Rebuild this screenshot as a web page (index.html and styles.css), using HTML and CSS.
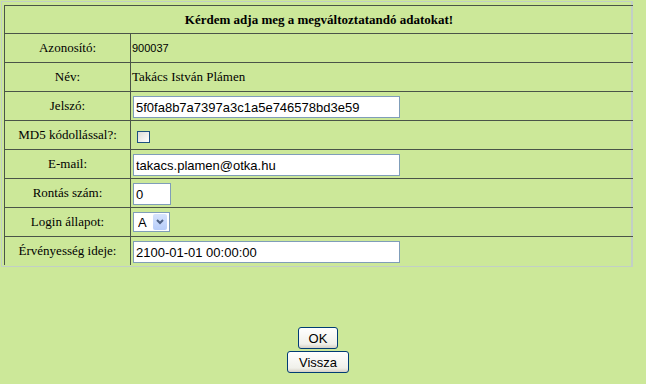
FILE: index.html
```html
<!DOCTYPE html>
<html lang="hu">
  <head>
    <meta charset="UTF-8" />
    <title>Felhasználó módosítása</title>
    <link rel="stylesheet" href="styles.css">
  </head>
  <body>
    <div class="page">
      <div class="frame">
        <table class="form-table">
          <tr>
            <th colspan="2">Kérdem adja meg a megváltoztatandó adatokat!</th>
          </tr>
          <tr>
            <td class="label">Azonosító:</td>
            <td class="value small">900037</td>
          </tr>
          <tr>
            <td class="label">Név:</td>
            <td class="value">Takács István Plámen</td>
          </tr>
          <tr>
            <td class="label">Jelszó:</td>
            <td class="value"><input type="text" class="field wide" value="5f0fa8b7a7397a3c1a5e746578bd3e59" /></td>
          </tr>
          <tr>
            <td class="label">MD5 kódollással?:</td>
            <td class="value"><input type="checkbox" class="check" /></td>
          </tr>
          <tr>
            <td class="label">E-mail:</td>
            <td class="value"><input type="text" class="field wide" value="takacs.plamen@otka.hu" /></td>
          </tr>
          <tr>
            <td class="label">Rontás szám:</td>
            <td class="value"><input type="text" class="field short" value="0" /></td>
          </tr>
          <tr>
            <td class="label">Login állapot:</td>
            <td class="value">
              <span class="select-box">
                <select class="select">
                  <option>A</option>
                  <option>I</option>
                </select>
                <span class="select-arrow">
                  <svg width="8" height="6" viewBox="0 0 8 6">
                    <path d="M1 1 L4 4 L7 1" fill="none" stroke="#4d6185" stroke-width="2" />
                  </svg>
                </span>
              </span>
            </td>
          </tr>
          <tr>
            <td class="label">Érvényesség ideje:</td>
            <td class="value"><input type="text" class="field wide" value="2100-01-01 00:00:00" /></td>
          </tr>
        </table>
      </div>

      <div class="buttons">
        <button class="btn ok">OK</button>
        <button class="btn">Vissza</button>
      </div>
    </div>
  </body>
</html>
```

FILE: styles.css
```css
body {
  margin: 0;
  background-color: #cce899;
  font-family: "Liberation Serif", "Times New Roman", serif;
  font-size: 13px;
  color: black;
}

.page {
  width: 636px;
  padding-top: 1px;
}

.frame {
  margin-left: 1px;
  width: 632px;
  border: 1px solid #c2cfc6;
  border-right-width: 2px;
  padding: 3px 0 1px 2px;
  box-sizing: border-box;
}

.form-table {
  border-collapse: separate;
  border-spacing: 0;
  width: 629px;
  border-top: 1px solid #4a5448;
  border-left: 1px solid #4a5448;
}

.form-table th {
  height: 27px;
  padding: 0;
  font-weight: bold;
  text-align: center;
  border-bottom: 1px solid #4a5448;
}

.form-table td {
  height: 28px;
  padding: 0;
  border-bottom: 1px solid #4a5448;
}

.form-table tr:last-child td {
  border-bottom: none;
}

.label {
  width: 125px;
  text-align: center;
  border-right: 1px solid #4a5448;
}

.value {
  padding-left: 1px !important;
}

.small {
  font-family: "Liberation Sans", Arial, sans-serif;
  font-size: 11px;
}

.field {
  height: 22px;
  box-sizing: border-box;
  margin: 2px 0 0 1px;
  padding: 0 2px;
  border: 1px solid #7f9db9;
  font-family: "Liberation Sans", Arial, sans-serif;
  font-size: 13px;
  color: black;
  vertical-align: middle;
  outline: none;
}

.wide {
  width: 267px;
}

.short {
  width: 38px;
}

.check {
  appearance: none;
  width: 13px;
  height: 12px;
  margin: 1px 0 0 5px;
  border: 1px solid #1c5180;
  background: linear-gradient(135deg, #dcdcd7, #ffffff);
  vertical-align: middle;
}

.select-box {
  position: relative;
  display: inline-block;
  margin-left: 1px;
  vertical-align: middle;
}

.select {
  appearance: none;
  width: 37px;
  height: 20px;
  padding: 0 0 0 4px;
  border: 1px solid #7f9db9;
  background: white;
  font-family: "Liberation Sans", Arial, sans-serif;
  font-size: 13px;
  color: black;
  outline: none;
}

.select-arrow {
  position: absolute;
  top: 2px;
  left: 20px;
  width: 14px;
  height: 16px;
  background: linear-gradient(#d6e3fd, #b7cdf9);
  border-radius: 2px;
  display: flex;
  align-items: center;
  justify-content: center;
  pointer-events: none;
}

.buttons {
  margin-top: 60px;
  display: flex;
  flex-direction: column;
  align-items: center;
  gap: 2px;
}

.btn {
  height: 22px;
  padding: 0 11px;
  border: 1px solid #003c74;
  border-radius: 3px;
  background: linear-gradient(#ffffff, #f0f0ea 80%, #d6d0c5);
  font-family: "Liberation Sans", Arial, sans-serif;
  font-size: 13px;
  color: black;
  cursor: pointer;
}

.ok {
  padding: 0 10px;
}
```
